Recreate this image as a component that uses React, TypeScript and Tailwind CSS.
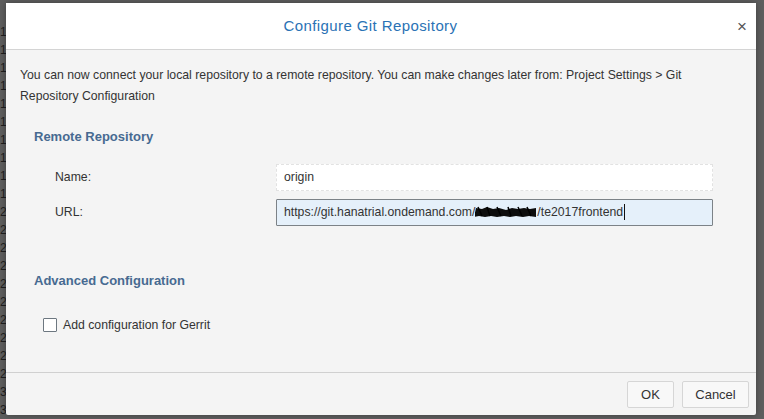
import React from 'react'

const gutter = ['1', '1', '1', '1', '1', '1', '1', '1', '1', '1', '2', '2', '2', '2', '2', '2', '2', '2', '2', '2', '3', '3']

function Redaction() {
  // black scribble covering part of the url
  return (
    <svg width="62" height="12" viewBox="0 0 62 12" className="inline-block align-[-1px]">
      <path d="M1 2l6 1 5-2 6 2 6-1 7 2 6-2 6 1 6-1 6 1 6-1v9l-7-1-6 1-7-1-6 1-6-1-7 1-6-1-6 1-6-1-5 1z" fill="#0d0d0d" />
      <path d="M3 1l4 9M12 1l3 9M22 1l4 9M33 1l3 9M43 1l4 9M52 1l4 9" stroke="#000" strokeWidth="1.5" />
    </svg>
  )
}

export default function App() {
  return (
    <div
      className="relative w-[764px] h-[419px] bg-[#5e5e5e] overflow-hidden"
      style={{ fontFamily: '"Liberation Sans", Arial, sans-serif' }}
    >
      {/* editor gutter behind the dialog */}
      <div className="absolute left-0 top-[23px] flex flex-col text-[12px] text-[#1e1e1e]">
        {gutter.map((n, i) => (
          <span key={i} className="block leading-[18px]">{n}</span>
        ))}
      </div>

      {/* Dialog */}
      <div className="absolute left-[6px] top-[3px] w-[750px] h-[412px] flex flex-col bg-[#f4f4f4] rounded-[2px] shadow-[0_0_6px_rgba(0,0,0,0.35)]">
        <div className="relative h-[47px] shrink-0 bg-white border-b border-[#d4d4d4] flex items-center justify-center pr-[21px]">
          <h1 className="text-[15px] tracking-[0.4px] text-[#2a72b5]">Configure Git Repository</h1>
          <button className="absolute right-[9px] top-[15px] text-[#555] text-[17px] leading-none">×</button>
        </div>

        <div className="flex-1 px-[14px] pt-[15px] text-[12.25px] text-[#333]">
          <p className="leading-[21px] pr-[30px]">
            You can now connect your local repository to a remote repository. You can make changes later from: Project Settings &gt; Git Repository Configuration
          </p>

          <h2 className="mt-[20px] ml-[14px] text-[13px] font-bold text-[#476a91]">Remote Repository</h2>

          <div className="mt-[17px] flex items-center">
            <span className="ml-[35px] w-[221px]">Name:</span>
            <div className="w-[437px] h-[27px] flex items-center px-[7px] bg-white border border-dashed border-[#e2e2e2]">
              origin
            </div>
          </div>
          <div className="mt-[8px] flex items-center">
            <span className="ml-[35px] w-[221px]">URL:</span>
            <div className="w-[437px] h-[27px] flex items-center px-[7px] bg-[#e5f0fa] border border-[#7c8287] rounded-[1px]">
              <span>https://git.hanatrial.ondemand.com/</span>
              <Redaction />
              <span>/te2017frontend</span>
              <span className="ml-[1px] w-[1px] h-[16px] bg-[#111]" />
            </div>
          </div>

          <h2 className="mt-[45px] ml-[14px] text-[13px] font-bold text-[#476a91]">Advanced Configuration</h2>

          <label className="mt-[26px] ml-[23px] flex items-center gap-[6px]">
            <span className="w-[14px] h-[14px] bg-white border border-[#6d7780] rounded-[1px]" />
            <span>Add configuration for Gerrit</span>
          </label>
        </div>

        <div className="h-[43px] shrink-0 border-t border-[#d0d0d0] flex items-center justify-end gap-[8px] pr-[7px] pt-[1px]">
          <button className="w-[47px] h-[27px] text-[13px] text-[#333] bg-[#f8f8f8] border border-[#d6d6d6] rounded-[2px]">OK</button>
          <button className="w-[67px] h-[27px] text-[13px] text-[#333] bg-[#f8f8f8] border border-[#d6d6d6] rounded-[2px]">Cancel</button>
        </div>
      </div>
    </div>
  )
}
